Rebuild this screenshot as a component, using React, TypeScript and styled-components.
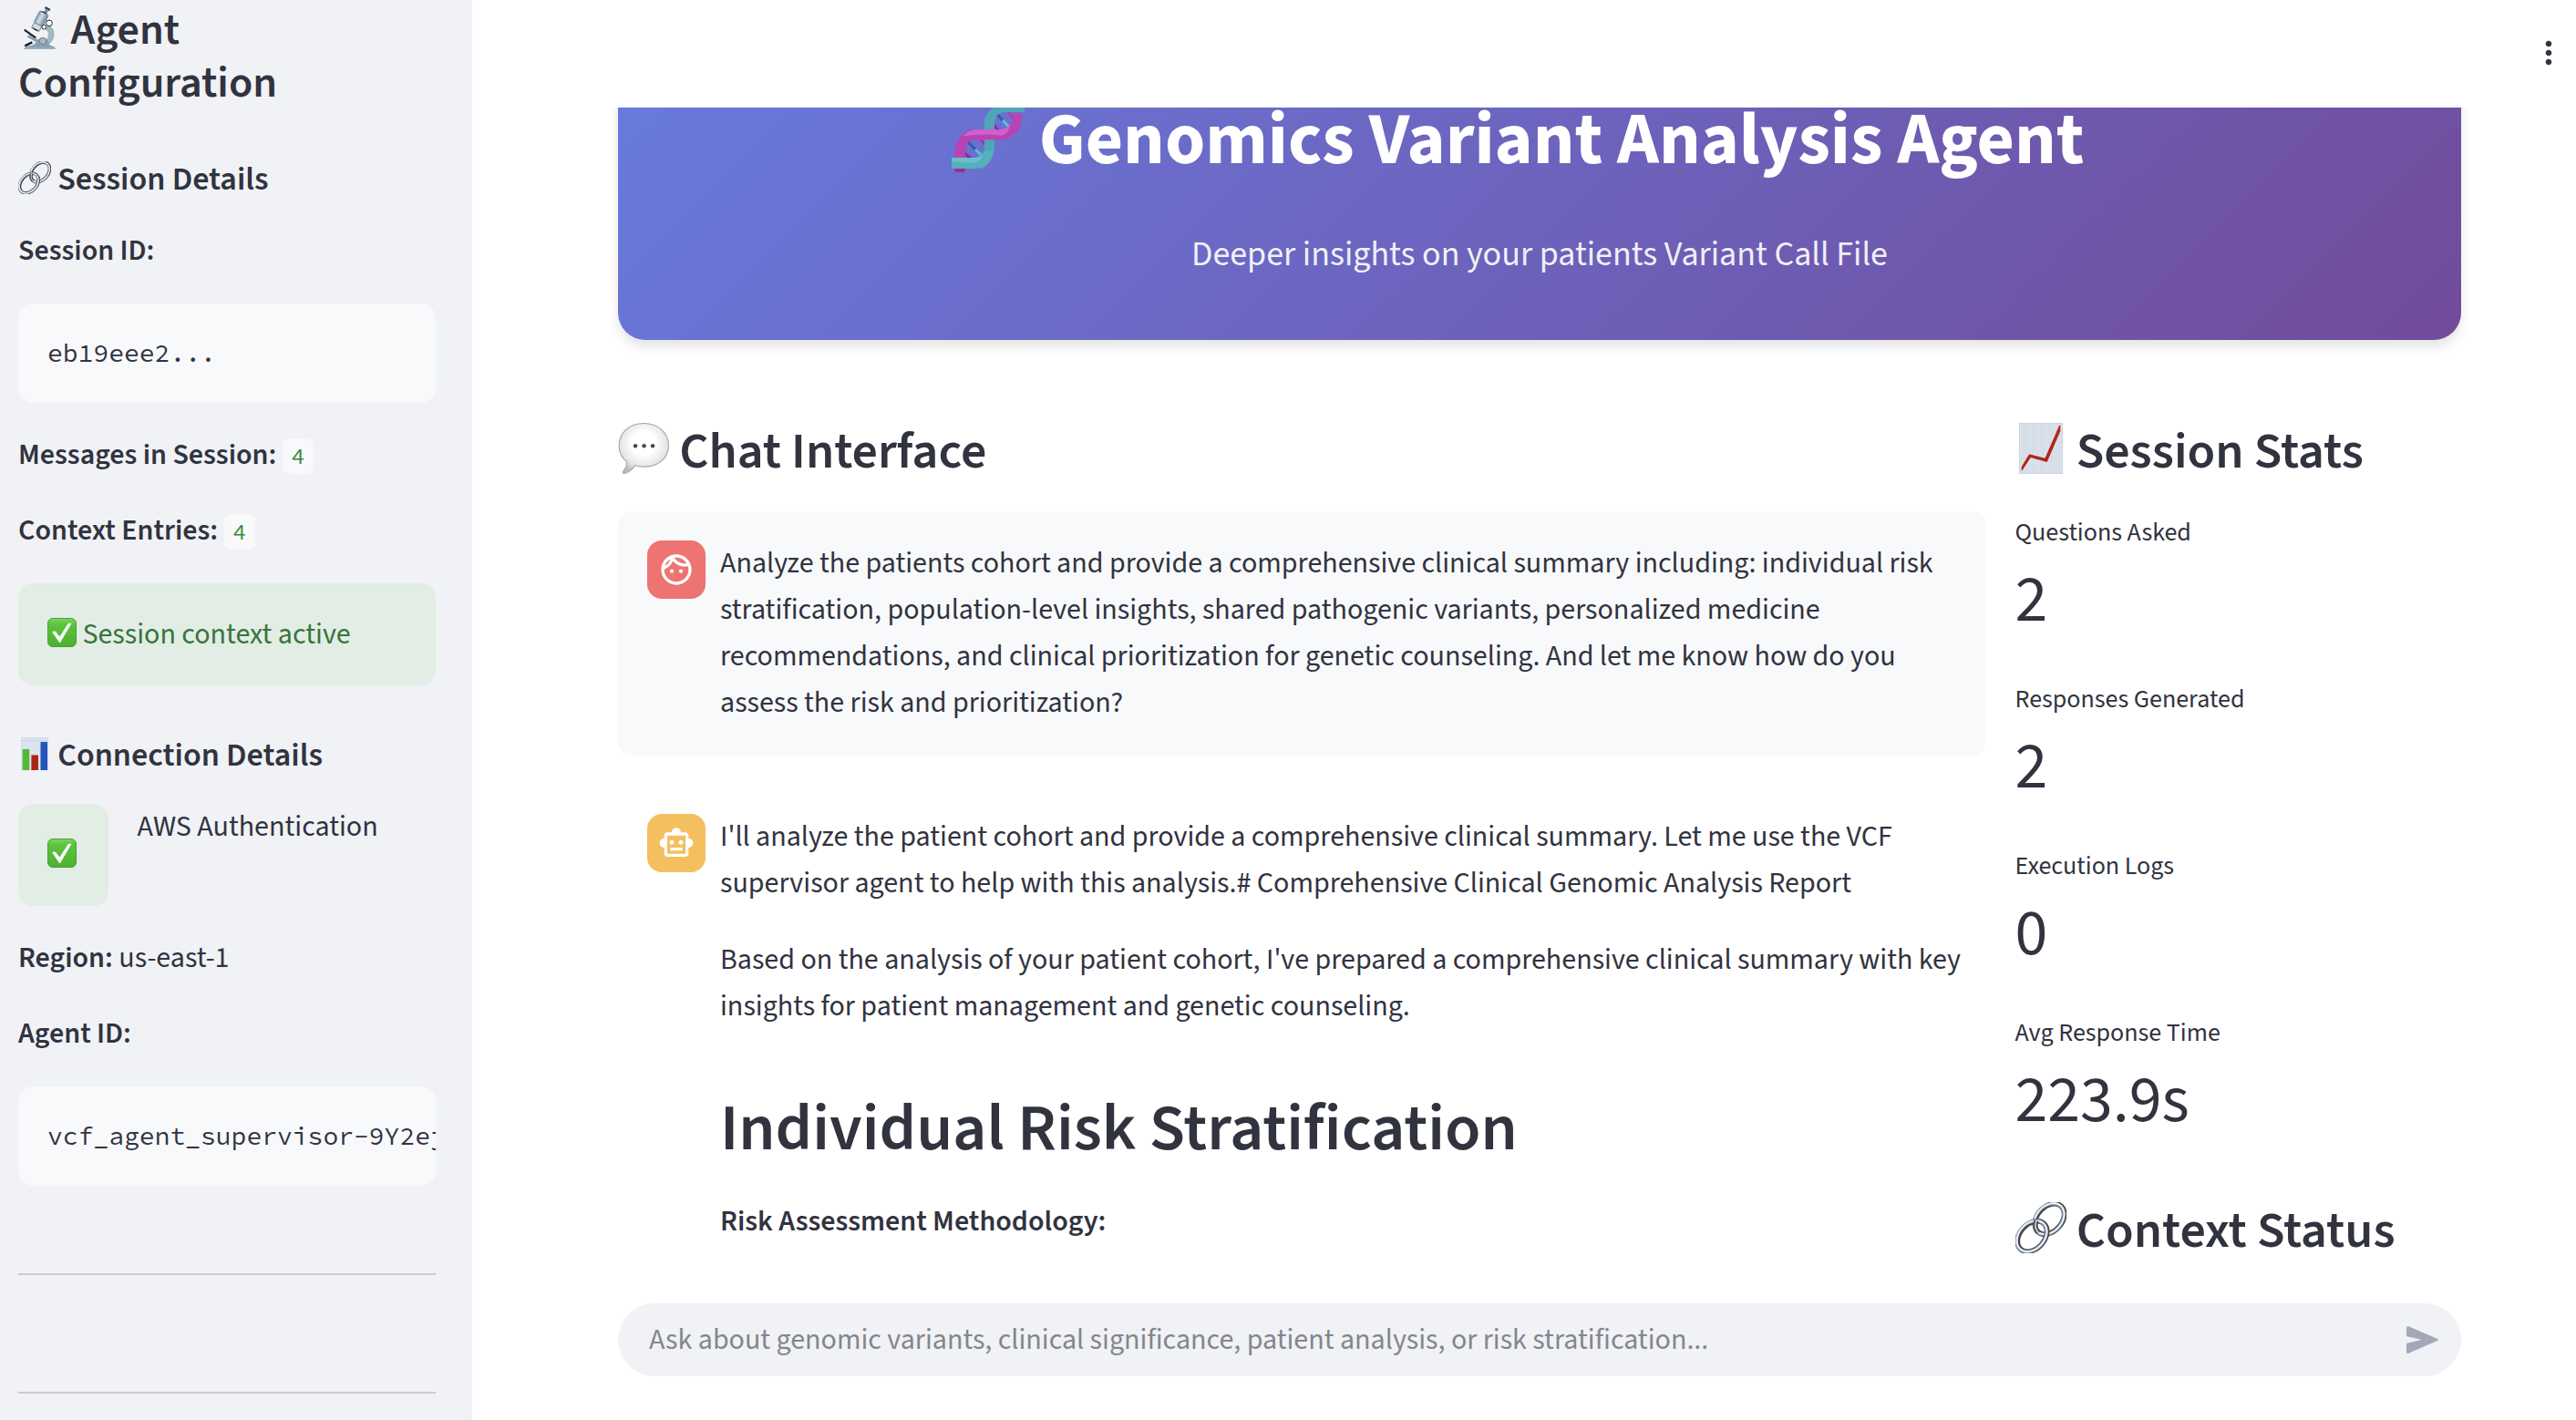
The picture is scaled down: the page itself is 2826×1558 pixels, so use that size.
import React from "react";
import styled, { createGlobalStyle } from "styled-components";
import { MdMoreVert, MdOutlineFace, MdOutlineSmartToy } from "react-icons/md";

const ink = "#31333f";
const panel = "#f0f2f6";
const surface = "#f8f9fb";
const sans = `"Source Sans 3", "Noto Sans CJK SC", "Noto Sans", sans-serif`;
const mono = `"Source Code Pro", "Liberation Mono", monospace`;

const GlobalStyle = createGlobalStyle`
  *, *::before, *::after { box-sizing: border-box; }
  body {
    margin: 0;
    background: #ffffff;
    color: ${ink};
    font-family: ${sans};
    font-size: 32px;
    line-height: 51px;
  }
  h1, h2, h3, p, dl, dd, pre { margin: 0; }
`;

const Page = styled.div`
  display: flex;
  height: 100vh;
  overflow: hidden;
`;

/* ---------- Sidebar ---------- */

const Sidebar = styled.aside`
  display: flex;
  flex-direction: column;
  gap: 32px;
  flex: 0 0 518px;
  padding: 4px 40px 0 20px;
  overflow: hidden;
  background: ${panel};
  > * { flex-shrink: 0; }
`;

const SidebarTitle = styled.h2`
  font-size: 48px;
  font-weight: 600;
  line-height: 58px;
`;

const SidebarHeading = styled.h3`
  padding-top: 24px;
  font-size: 36px;
  font-weight: 600;
  line-height: 42px;
`;

const Strong = styled.strong`
  font-weight: 600;
`;

const CodeBlock = styled.pre`
  padding: 32px 0 32px 32px;
  overflow: hidden;
  border-radius: 16px;
  background: ${surface};
  font-family: ${mono};
  font-size: 28px;
  line-height: 45px;
`;

const InlineCode = styled.code`
  padding: 4px 10px;
  border-radius: 8px;
  background: ${surface};
  color: #3a863e;
  font-family: ${mono};
  font-size: 24px;
  line-height: 24px;
`;

const Alert = styled.div`
  padding: 32px;
  border-radius: 16px;
  background: #e2ede5;
  color: #37743d;
  line-height: 48px;
  white-space: nowrap;
`;

const SplitRow = styled.div`
  display: flex;
  gap: 32px;
`;

const Split = styled.div<{ $share: number }>`
  flex: 1 1 calc(${(p) => p.$share}% - 32px);
  min-width: 0;
`;

const Divider = styled.hr`
  width: 100%;
  height: 2px;
  margin: 64px 0 32px;
  border: 0;
  background: #cacbd1;
`;

/* ---------- Main ---------- */

const Main = styled.main`
  display: flex;
  flex: 1;
  flex-direction: column;
  min-width: 0;
`;

const TopBar = styled.header`
  display: flex;
  flex: 0 0 118px;
  align-items: center;
  justify-content: flex-end;
  padding: 0 10px 2px;
`;

const MenuButton = styled.button`
  display: flex;
  padding: 0;
  border: 0;
  background: none;
  color: ${ink};
  font-size: 40px;
`;

const Viewport = styled.div`
  flex: 1;
  min-height: 0;
  padding: 0 126px 0 160px;
  overflow: hidden;
`;

const Scrolled = styled.div`
  margin-top: -116px;
`;

const Banner = styled.section`
  padding: 104px 64px 63px;
  border-radius: 30px;
  background: linear-gradient(135deg, #687ce0 0%, #714b9a 100%);
  box-shadow: 0 8px 12px rgba(0, 0, 0, 0.1);
  color: #ffffff;
  text-align: center;
`;

const BannerTitle = styled.h1`
  padding-right: 48px;
  font-size: 80px;
  font-weight: 700;
  line-height: 96px;
`;

const BannerText = styled.p`
  margin-top: 47px;
  font-size: 38px;
  line-height: 61px;
  opacity: 0.9;
`;

const Columns = styled.div`
  display: flex;
  gap: 32px;
  margin-top: 89px;
`;

const SectionTitle = styled.h2<{ $spaced?: boolean }>`
  margin-top: ${(p) => (p.$spaced ? "58px" : "0")};
  margin-bottom: 32px;
  font-size: 56px;
  font-weight: 600;
  line-height: 67px;
`;

const Message = styled.article<{ $filled?: boolean }>`
  display: flex;
  align-items: flex-start;
  gap: 16px;
  margin-bottom: 32px;
  padding: 32px 16px 32px 32px;
  border-radius: 16px;
  background: ${(p) => (p.$filled ? surface : "transparent")};
`;

const Avatar = styled.div<{ $color: string }>`
  display: flex;
  flex: 0 0 64px;
  height: 64px;
  align-items: center;
  justify-content: center;
  border-radius: 16px;
  background: ${(p) => p.$color};
  color: #ffffff;
  font-size: 40px;
`;

const MessageBody = styled.div`
  display: flex;
  flex: 1;
  flex-direction: column;
  gap: 33px;
  min-width: 0;
`;

const ReportTitle = styled.h1`
  padding-top: 32px;
  font-size: 72px;
  font-weight: 600;
  line-height: 87px;
`;

const Stats = styled.dl`
  display: flex;
  flex-direction: column;
  gap: 34px;
`;

const StatLabel = styled.dt`
  font-size: 28px;
  line-height: 46px;
`;

const StatValue = styled.dd`
  font-size: 72px;
  line-height: 103px;
`;

const Composer = styled.form`
  display: flex;
  align-items: center;
  height: 80px;
  margin: 0 126px 48px 160px;
  padding: 0 24px 0 34px;
  border-radius: 40px;
  background: ${panel};
`;

const ComposerInput = styled.input`
  flex: 1;
  min-width: 0;
  padding: 0;
  border: 0;
  outline: 0;
  background: none;
  color: ${ink};
  font-family: ${sans};
  font-size: 32px;
  line-height: 48px;
  &::placeholder { color: #84868d; opacity: 1; }
`;

const SendButton = styled.button`
  display: flex;
  padding: 0;
  border: 0;
  background: none;
  color: #a3a8b9;
`;

/* ---------- Pictograms ---------- */

const Glyph = styled.svg`
  width: 1em;
  height: 1em;
  vertical-align: -0.125em;
`;

const Microscope = () => (
  <Glyph viewBox="60 17 144 144" aria-hidden="true">
    <defs>
      <linearGradient id="tube" x1="0" y1="0" x2="1" y2="0">
        <stop offset="0" stopColor="#7f98aa" />
        <stop offset="0.4" stopColor="#cfe0ec" />
        <stop offset="1" stopColor="#6f8799" />
      </linearGradient>
    </defs>
    <path d="M158 82 Q182 92 176 122 Q170 142 150 148 L146 138 Q162 126 160 108 Q158 98 148 94 Z" fill="#a3b8c6" stroke="#7d909e" strokeWidth="1.5" />
    <path d="M80 97 L118 124" stroke="#1b1d22" strokeWidth="6" />
    <path d="M92 117 L130 138" stroke="#8aa0b0" strokeWidth="9" />
    <path d="M82 150 L106 138" stroke="#1b1d22" strokeWidth="7" />
    <path d="M78 161 Q80 151 104 149 L116 142 Q124 124 141 122 Q158 124 164 148 Q182 151 183 161 Z" fill="#86a1b5" />
    <path d="M79 158 H182" stroke="#b9d0df" strokeWidth="2" />
    <circle cx="141" cy="134" r="11" fill="#b5b8ba" stroke="#71808c" strokeWidth="3" />
    <g transform="rotate(28 130 68)">
      <rect x="125" y="16" width="19" height="8" rx="3" fill="#3b4149" />
      <rect x="129" y="23" width="11" height="12" fill="#8498a6" />
      <path d="M116 40 Q130 28 147 40 Z" fill="#17191d" />
      <rect x="115" y="38" width="33" height="42" rx="4" fill="url(#tube)" stroke="#5d7383" strokeWidth="1.5" />
      <rect x="117" y="80" width="28" height="20" rx="3" fill="#d6d9db" stroke="#56616a" strokeWidth="2" />
      <path d="M118 97 Q131 106 144 97 Z" fill="#22262b" />
    </g>
    <circle cx="162" cy="75" r="10" fill="#ffffff" stroke="#24282c" strokeWidth="3" />
    <circle cx="145" cy="88" r="7" fill="#ffffff" stroke="#24282c" strokeWidth="3" />
  </Glyph>
);

const Ring = ({ cx, cy }: { cx: number; cy: number }) => (
  <g transform={`rotate(-48 ${cx} ${cy})`} fill="none">
    <ellipse cx={cx} cy={cy} rx="34" ry="24" stroke="#4b4245" strokeWidth="10" />
    <ellipse cx={cx - 1} cy={cy - 1} rx="34" ry="25" stroke="#8fa9c6" strokeWidth="6" />
    <ellipse cx={cx} cy={cy - 1} rx="34" ry="25" stroke="#f4f6f8" strokeWidth="3" />
  </g>
);

const Chain = () => (
  <Glyph viewBox="0 0 100 100" aria-hidden="true">
    <Ring cx={67} cy={33} />
    <Ring cx={33} cy={67} />
    <path d="M41 36 Q36 50 45 60" fill="none" stroke="#4b4548" strokeWidth="9" />
    <path d="M41 36 Q36 50 45 60" fill="none" stroke="#c9d3dc" strokeWidth="3" />
  </Glyph>
);

const Check = () => (
  <Glyph viewBox="0 0 100 100" role="img" aria-label="OK">
    <defs>
      <linearGradient id="green" x1="0" y1="0" x2="0" y2="1">
        <stop offset="0" stopColor="#7ed862" />
        <stop offset="0.2" stopColor="#5cc43d" />
        <stop offset="1" stopColor="#4fb030" />
      </linearGradient>
    </defs>
    <rect x="1.5" y="1.5" width="97" height="97" rx="17" fill="url(#green)" stroke="#459a35" strokeWidth="3" />
    <path d="M16 48 Q22 44 28 46 L42 64 L71 19 L83 18 L44 84 L41 84 Z" fill="#ffffff" />
  </Glyph>
);

const BarChart = () => (
  <Glyph viewBox="0 0 100 100" aria-hidden="true">
    <rect x="8" y="0" width="84" height="100" fill="#dae4ee" />
    <path d="M8 1 H92 M8 10 H92" stroke="#c5d0da" strokeWidth="2" />
    <rect x="13" y="36" width="21" height="64" fill="#52b83a" />
    <rect x="40" y="54" width="21" height="46" fill="#ae2418" />
    <rect x="68" y="14" width="21" height="86" fill="#2456b8" />
  </Glyph>
);

const TrendChart = () => (
  <Glyph viewBox="0 0 100 100" aria-hidden="true">
    <defs>
      <pattern id="grid" width="4" height="4" patternUnits="userSpaceOnUse">
        <rect width="4" height="4" fill="#dde6ef" />
        <path d="M0 0 H4 M0 0 V4" stroke="#c3ced8" strokeWidth="1" />
      </pattern>
    </defs>
    <rect x="7.5" y="0.5" width="85" height="99" fill="url(#grid)" stroke="#bcc6ce" />
    <path d="M12 95 L12 86 L27 61 L58 69 L86 5 L88 5 L88 16 L62 77 L30 68 Z" fill="#b2241a" />
  </Glyph>
);

const Bubble = () => (
  <Glyph viewBox="0 0 100 100" aria-hidden="true">
    <defs>
      <radialGradient id="bubble" cx="0.5" cy="0.4" r="0.6">
        <stop offset="0.4" stopColor="#ffffff" />
        <stop offset="0.8" stopColor="#e4e4e4" />
        <stop offset="1" stopColor="#bdbdbd" />
      </radialGradient>
    </defs>
    <path
      d="M50 1 C78 1 99 19 99 44 C99 70 78 86 51 86 C44 86 38 85 33 83 C29 91 20 98 12 99 C9 99 9 96 11 94 C16 88 18 82 17 76 C7 68 2 57 2 44 C2 19 23 1 50 1 Z"
      fill="url(#bubble)"
      stroke="#a6a6a6"
      strokeWidth="2"
    />
    <circle cx="34" cy="45" r="4" fill="#4a4a4a" />
    <circle cx="51" cy="45" r="4" fill="#4a4a4a" />
    <circle cx="68" cy="45" r="4" fill="#4a4a4a" />
  </Glyph>
);

const Helix = () => (
  <Glyph viewBox="42 27 240 240" aria-hidden="true">
    <g fill="none" strokeWidth="9">
      <path d="M165 95 L212 146" stroke="#8c2a93" />
      <path d="M186 70 L212 98" stroke="#2f5fa8" />
      <path d="M210 96 L240 127" stroke="#5bbfd6" />
      <path d="M228 70 L262 104" stroke="#b33aa8" />
      <path d="M138 160 L168 192" stroke="#a8399f" />
      <path d="M92 164 L122 194" stroke="#2f5fa8" />
      <path d="M120 192 L150 220" stroke="#5bbfd6" />
      <path d="M68 192 L106 222" stroke="#8c2a93" />
    </g>
    <path d="M149 130 V105 Q150 68 190 48 Q215 34 282 34 V69 H212 Q184 74 183 108 V175 Q182 236 140 254 L120 222 Q150 214 150 178 Z" fill="#50a5b8" />
    <path d="M52 267 V200 Q58 140 110 127 H200 Q232 122 242 98 L250 72 H272 Q276 128 240 148 Q225 160 205 160 H112 Q88 166 87 200 V267 Z" fill="#b943b4" />
    <path d="M80 148 Q95 130 120 127 H200 Q222 124 234 112 Q232 140 205 146 Q150 138 80 148 Z" fill="#d35fcc" />
    <path d="M42 219 H112 Q140 219 150 200 L182 190 Q174 240 140 253 Q90 258 42 254 Z" fill="#55afbd" />
    <path d="M42 219 H112 Q135 219 146 208 Q140 232 112 236 Q76 238 42 230 Z" fill="#69c0cb" />
    <rect x="53" y="255" width="32" height="12" fill="#9b2b94" />
  </Glyph>
);

const SendIcon = () => (
  <svg width="36" height="30" viewBox="0 0 36 30" aria-hidden="true">
    <path
      d="M2.4 .3 L34 13.9 Q35.8 15 34 16.1 L2.4 29.7 Q0 30.4 0 28.3 V20.2 Q0 18.9 1.5 18.5 L16.8 15 L1.5 11.5 Q0 11.1 0 9.8 V1.7 Q0 -.4 2.4 .3 Z"
      fill="currentColor"
    />
  </svg>
);

/* ---------- Content ---------- */

const stats = [
  { label: "Questions Asked", value: "2" },
  { label: "Responses Generated", value: "2" },
  { label: "Execution Logs", value: "0" },
  { label: "Avg Response Time", value: "223.9s" },
];

export default function App() {
  return (
    <>
      <GlobalStyle />
      <Page>
        <Sidebar>
          <SidebarTitle><Microscope /> Agent Configuration</SidebarTitle>
          <SidebarHeading><Chain /> Session Details</SidebarHeading>
          <p><Strong>Session ID:</Strong></p>
          <CodeBlock>eb19eee2...</CodeBlock>
          <p><Strong>Messages in Session:</Strong> <InlineCode>4</InlineCode></p>
          <p><Strong>Context Entries:</Strong> <InlineCode>4</InlineCode></p>
          <Alert><Check /> Session context active</Alert>
          <SidebarHeading><BarChart /> Connection Details</SidebarHeading>
          <SplitRow>
            <Split $share={25}><Alert><Check /></Alert></Split>
            <Split $share={75}><p>AWS Authentication</p></Split>
          </SplitRow>
          <p><Strong>Region:</Strong> us-east-1</p>
          <p><Strong>Agent ID:</Strong></p>
          <CodeBlock>vcf_agent_supervisor-9Y2ej</CodeBlock>
          <Divider />
          <Divider />
        </Sidebar>

        <Main>
          <TopBar>
            <MenuButton type="button" aria-label="Main menu"><MdMoreVert /></MenuButton>
          </TopBar>

          <Viewport>
            <Scrolled>
              <Banner>
                <BannerTitle><Helix /> Genomics Variant Analysis Agent</BannerTitle>
                <BannerText>Deeper insights on your patients Variant Call File</BannerText>
              </Banner>

              <Columns>
                <Split $share={75}>
                  <SectionTitle><Bubble /> Chat Interface</SectionTitle>
                  <Message $filled>
                    <Avatar $color="#ed7471"><MdOutlineFace /></Avatar>
                    <MessageBody>
                      <p>
                        Analyze the patients cohort and provide a comprehensive clinical summary including:
                        individual risk stratification, population-level insights, shared pathogenic variants,
                        personalized medicine recommendations, and clinical prioritization for genetic
                        counseling. And let me know how do you assess the risk and prioritization?
                      </p>
                    </MessageBody>
                  </Message>
                  <Message>
                    <Avatar $color="#f4bf5f"><MdOutlineSmartToy /></Avatar>
                    <MessageBody>
                      <p>
                        I'll analyze the patient cohort and provide a comprehensive clinical summary. Let me
                        use the VCF supervisor agent to help with this analysis.# Comprehensive Clinical
                        Genomic Analysis Report
                      </p>
                      <p>
                        Based on the analysis of your patient cohort, I've prepared a comprehensive clinical
                        summary with key insights for patient management and genetic counseling.
                      </p>
                      <ReportTitle>Individual Risk Stratification</ReportTitle>
                      <p><Strong>Risk Assessment Methodology:</Strong></p>
                    </MessageBody>
                  </Message>
                </Split>

                <Split $share={25}>
                  <SectionTitle><TrendChart /> Session Stats</SectionTitle>
                  <Stats>
                    {stats.map((s) => (
                      <div key={s.label}>
                        <StatLabel>{s.label}</StatLabel>
                        <StatValue>{s.value}</StatValue>
                      </div>
                    ))}
                  </Stats>
                  <SectionTitle $spaced><Chain /> Context Status</SectionTitle>
                </Split>
              </Columns>
            </Scrolled>
          </Viewport>

          <Composer onSubmit={(e) => e.preventDefault()}>
            <ComposerInput
              type="text"
              aria-label="Chat message"
              placeholder="Ask about genomic variants, clinical significance, patient analysis, or risk stratification..."
            />
            <SendButton type="submit" aria-label="Send message"><SendIcon /></SendButton>
          </Composer>
        </Main>
      </Page>
    </>
  );
}
